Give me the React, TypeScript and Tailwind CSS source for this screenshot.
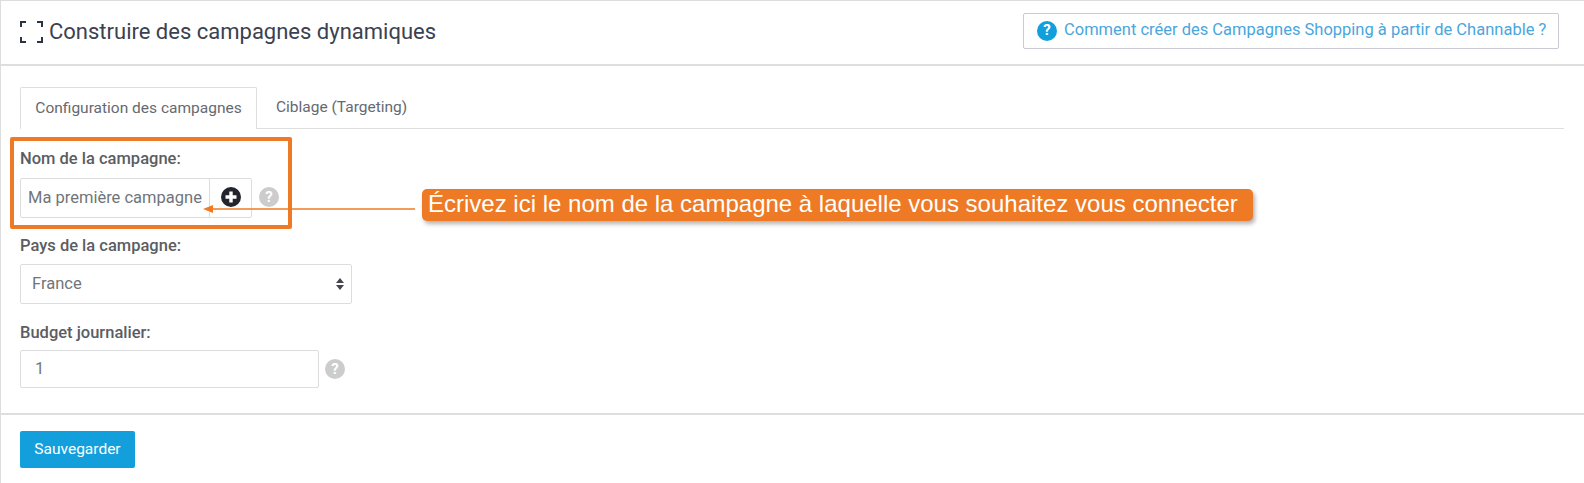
import React from "react";

function Help({ className = "" }: { className?: string }) {
  return (
    <span className={`flex h-5 w-5 shrink-0 items-center justify-center rounded-full bg-[#cccccc] text-[15px] font-bold leading-none text-white ${className}`}>?</span>
  );
}

export default function App() {
  return (
    <div className="relative h-[483px] w-[1584px] overflow-hidden border-l border-t border-[#dddddd] bg-white font-['Roboto',sans-serif] text-[#666a70]">
      <header className="flex h-[65px] items-center justify-between border-b-[2px] border-[#dedede] pb-[2px] pl-[19px] pr-[25px]">
        <div className="flex items-center gap-[6px]">
          <svg width="23" height="22" viewBox="0 0 23 22" fill="none" stroke="#2b3444" strokeWidth="2">
            <path d="M1 6V1h5M17 1h5v5M1 16v5h5M17 21h5v-5" />
          </svg>
          <h1 className="text-[22px] font-normal leading-none text-[#3b4151]">Construire des campagnes dynamiques</h1>
        </div>
        <a className="mb-[2px] flex h-[36px] w-[536px] items-center gap-[7px] rounded-[2px] border border-[#c9cad3] pl-[13px] text-[16.5px] text-[#4aa6dc]">
          <span className="flex h-5 w-5 items-center justify-center rounded-full bg-[#129fdc] text-[15px] font-bold leading-none text-white">?</span>
          Comment créer des Campagnes Shopping à partir de Channable ?
        </a>
      </header>

      <main className="pl-[19px] pr-[20px] pt-[21px]">
        <nav className="flex h-[42px] border-b border-[#dedede] text-[15.5px]">
          <div className="flex h-[42px] w-[237px] items-center justify-center rounded-t-[2px] border border-b-0 border-[#dedede] bg-white text-[#666a70]">Configuration des campagnes</div>
          <div className="flex items-center pl-[19px] text-[#666a70]">Ciblage (Targeting)</div>
        </nav>

        <section className="pt-[20px]">
          <label className="block text-[16.5px] font-medium leading-[20px] text-[#5a5d63]">Nom de la campagne:</label>
          <div className="mt-[9px] flex items-center">
            <div className="flex h-[40px] w-[232px] rounded-[2px] border border-[#dddddd]">
              <div className="flex w-[188px] items-center pl-[7px] text-[16.5px] text-[#71757a]">Ma première campagne</div>
              <div className="flex flex-1 items-center justify-center border-l border-[#dddddd] pb-[2px]">
                <svg width="20" height="20" viewBox="0 0 20 20">
                  <circle cx="10" cy="10" r="10" fill="#22262c" />
                  <path d="M10 4.5v11M4.5 10h11" stroke="#fff" strokeWidth="3.4" />
                </svg>
              </div>
            </div>
            <Help className="mb-[2px] ml-[7px]" />
          </div>
        </section>

        <section className="pt-[18px]">
          <label className="block text-[16.5px] font-medium leading-[20px] text-[#5a5d63]">Pays de la campagne:</label>
          <div className="mt-[8px] flex h-[40px] w-[332px] items-center justify-between rounded-[2px] border border-[#dddddd] pl-[11px] pr-[7px] text-[16.5px] text-[#71757a]">
            France
            <svg width="8" height="12" viewBox="0 0 8 12" fill="#43474d">
              <path d="M4 0L8 5H0zM4 12L0 7h8z" />
            </svg>
          </div>
        </section>

        <section className="pt-[19px]">
          <label className="block text-[16.5px] font-medium leading-[20px] text-[#5a5d63]">Budget journalier:</label>
          <div className="mt-[7px] flex items-center">
            <div className="flex h-[38px] w-[299px] items-center rounded-[2px] border border-[#dddddd] pl-[14px] text-[16.5px] text-[#71757a]">1</div>
            <Help className="ml-[6px]" />
          </div>
        </section>
      </main>

      <footer className="mt-[25px] border-t-[2px] border-[#dedede] pl-[19px] pt-[16px]">
        <button className="h-[37px] w-[115px] rounded-[2px] bg-[#129fdc] text-[15.5px] text-white">Sauvegarder</button>
      </footer>

      <div className="absolute left-[9px] top-[136px] h-[92px] w-[282px] rounded-[2px] border-[4px] border-[#ee7a25]" />
      <svg className="absolute left-[202px] top-[200px]" width="220" height="18" viewBox="0 0 220 18">
        <path d="M212 8H10" stroke="#ee7a25" strokeWidth="1.6" />
        <path d="M0 8L10 4v8z" fill="#ee7a25" />
      </svg>
      <div className="absolute left-[421px] top-[188px] flex h-[32px] w-[831px] items-center rounded-[5px] bg-[#ee7a25] pb-[3px] pl-[6px] font-['Liberation_Sans',sans-serif] text-[24px] text-white shadow-[2px_3px_4px_rgba(0,0,0,0.3)]">
        Écrivez ici le nom de la campagne à laquelle vous souhaitez vous connecter
      </div>
    </div>
  );
}
